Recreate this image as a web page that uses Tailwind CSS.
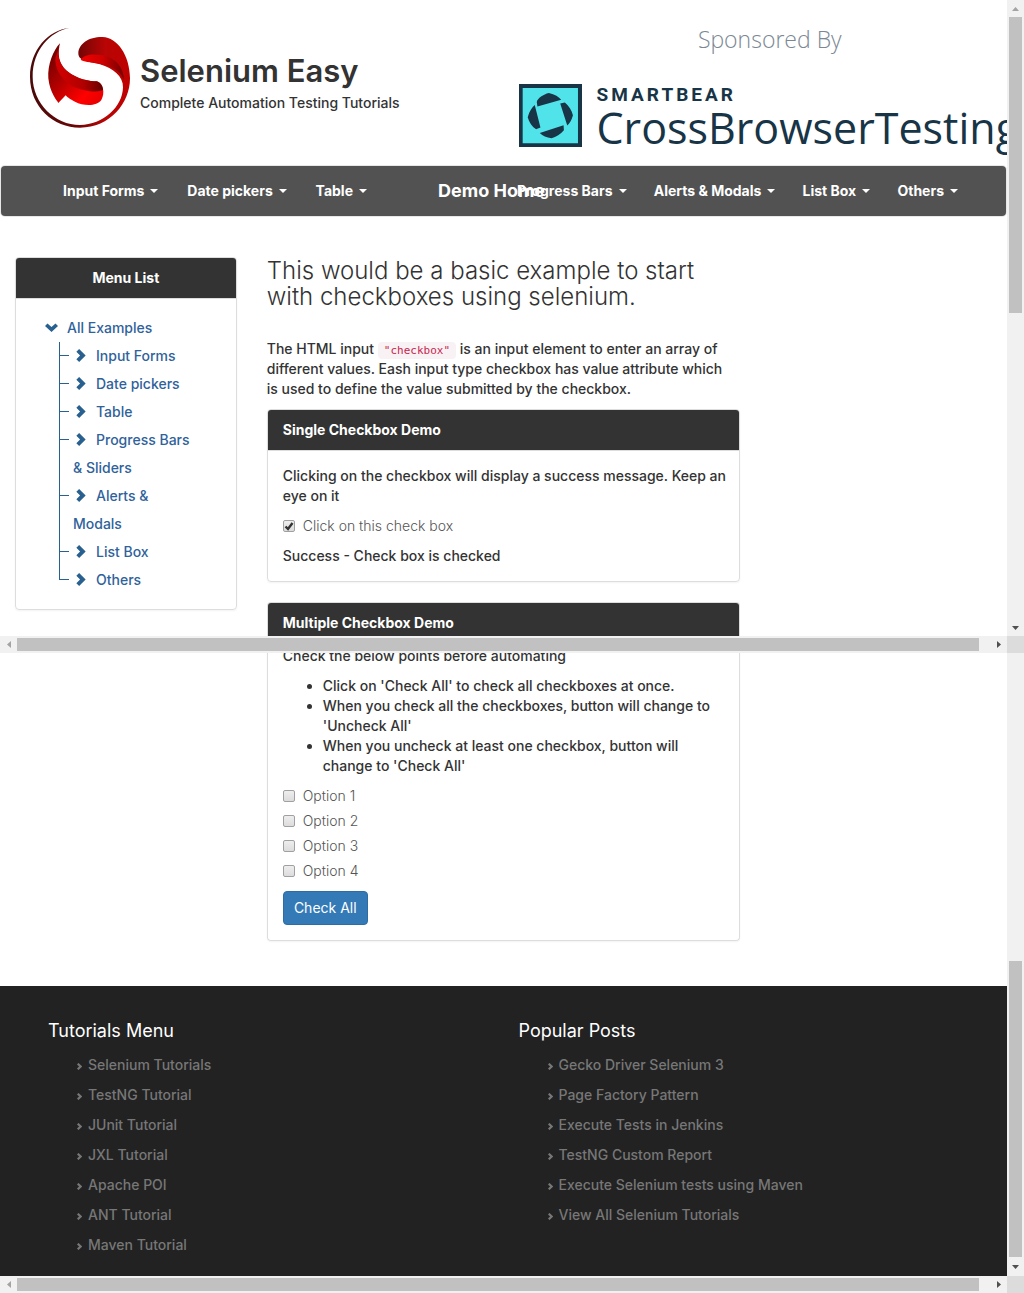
<!DOCTYPE html>
<html lang="en">
<head>
<meta charset="utf-8">
<title>Selenium Easy - Checkbox Demo</title>
<script src="https://cdn.jsdelivr.net/npm/@tailwindcss/browser@4"></script>
</head>
<body class="bg-white font-['Inter',sans-serif] text-[14px] leading-[20px] font-medium text-[#333]">
<svg class="hidden" aria-hidden="true">
  <symbol id="chev" viewBox="0 0 10 14"><path d="M0 3 3 0l7 7-7 7-3-3 4-4z" fill="currentColor"/></symbol>
  <symbol id="caret" viewBox="0 0 8 4"><path d="M0 0h8L4 4z" fill="currentColor"/></symbol>
  <symbol id="left" viewBox="0 0 4 7"><path d="M4 0v7L0 3.5z" fill="currentColor"/></symbol>
  <symbol id="right" viewBox="0 0 4 7"><path d="M0 0v7l4-3.5z" fill="currentColor"/></symbol>
  <symbol id="up" viewBox="0 0 7 4"><path d="M0 4h7L3.500 0z" fill="currentColor"/></symbol>
  <symbol id="down" viewBox="0 0 7 4"><path d="M0 0h7L3.500 4z" fill="currentColor"/></symbol>
  <symbol id="foot" viewBox="0 0 5 7"><path d="M.7.7 3.600 3.500.7 6.300" fill="none" stroke="currentColor" stroke-width="2.200"/></symbol>
</svg>

<!-- upper view -->
<section class="grid grid-cols-[minmax(0,1fr)_17px] grid-rows-[auto_17px]">
  <div class="overflow-hidden">
    <header class="grid grid-cols-2 h-[166px]">
      <div class="flex items-start pl-[30px] pt-7 gap-[10px]">
        <svg class="w-[100px] h-[100px] shrink-0" viewBox="90 84 300 300" role="img" aria-label="Selenium Easy">
          <defs>
            <linearGradient id="g1" x1="0" y1="0" x2="1" y2="0"><stop offset="0" stop-color="#4a0a0a"/><stop offset=".45" stop-color="#6a0505"/><stop offset=".75" stop-color="#b80505"/><stop offset="1" stop-color="#c00000"/></linearGradient>
            <linearGradient id="g2" x1="0" y1="0" x2="1" y2="1"><stop offset="0" stop-color="#5c0000"/><stop offset=".45" stop-color="#b80000"/><stop offset=".75" stop-color="#ff0000"/><stop offset="1" stop-color="#e00000"/></linearGradient>
            <linearGradient id="g3" x1="0" y1="0" x2="1" y2="0"><stop offset="0" stop-color="#d40000"/><stop offset=".6" stop-color="#b00000"/><stop offset="1" stop-color="#650000"/></linearGradient>
            <linearGradient id="g4" x1="0" y1="0" x2="1" y2="0"><stop offset="0" stop-color="#f00000"/><stop offset=".5" stop-color="#d00000"/><stop offset="1" stop-color="#700000"/></linearGradient>
          </defs>
          <path fill="url(#g1)" d="M235 160C236 130 268 110 308 111C352 113 389 165 390 235C390 310 330 383 240 383C160 383 90 320 90 230C90 150 145 90 208 84C150 95 98 150 98 230C98 310 165 375 240 375C310 375 368 320 369 262C370 230 340 205 300 193C270 185 235 185 235 160Z"/>
          <path fill="url(#g4)" d="M242 179C252 163 280 160 310 166C345 175 370 198 372 240C360 208 330 198 298 191C270 186 250 185 242 179Z"/>
          <path fill="url(#g2)" d="M180 130C172 160 175 190 200 212C235 240 270 243 290 244C310 250 316 280 304 300C290 320 250 318 225 305C210 298 200 290 197 286L175 309C170 300 150 280 145 235C142 195 160 150 180 130Z"/>
          <path fill="url(#g3)" d="M178 140C172 165 176 192 200 212C235 240 270 243 290 244C302 247 309 258 309 270C295 278 250 275 215 257C180 238 164 200 166 175Z"/>
        </svg>
        <div class="pt-[23px]">
          <h1 class="text-[31px] leading-[40px] font-semibold whitespace-nowrap">Selenium Easy</h1>
          <p class="mt-[2px] whitespace-nowrap">Complete Automation Testing Tutorials</p>
        </div>
      </div>
      <div class="pl-[15px] pt-6 font-['Open_Sans',sans-serif]">
        <p class="pl-[14px] text-center text-[23px] leading-[30px] font-light text-[#7b8894]">Sponsored By</p>
        <a href="#" class="mt-[30px] flex items-start gap-[15px] text-[#183447]">
          <svg class="w-[63px] h-[63px] shrink-0" viewBox="57 222 188 188" role="img" aria-label="SmartBear">
            <path fill="#183447" d="M57 222h188v188H57z"/><path fill="#50e4ea" d="M68 234h165v165H68z"/>
            <path fill="#183447" d="M110 276C112 264 130 253 146 249C164 253 176 261 183 269L112 289ZM180 280L194 277C206 287 214 300 218 315C214 330 208 340 201 346ZM190 345L191 360C181 372 168 380 154 384C139 382 128 376 119 368ZM121 352L108 357C95 349 87 335 83 321C88 304 96 292 104 285Z"/>
          </svg>
          <span class="block">
            <span class="block text-[19px] leading-[22px] font-bold tracking-[3px] font-['Roboto',sans-serif]">SMARTBEAR</span>
            <span class="block text-[43px] leading-[43px] font-normal whitespace-nowrap">CrossBrowserTesting</span>
          </span>
        </a>
      </div>
    </header>

    <nav class="relative mx-px flex h-[50px] items-center justify-between rounded-[4px] bg-[#525252] pl-[62px] pr-12 text-[14px] font-bold text-white ring-1 ring-[#e7e7e7]">
      <ul class="flex w-[304px] justify-between whitespace-nowrap">
        <li><a href="#" class="flex items-center gap-[6px]">Input Forms <svg class="h-1 w-2"><use href="#caret"/></svg></a></li>
        <li><a href="#" class="flex items-center gap-[6px]">Date pickers <svg class="h-1 w-2"><use href="#caret"/></svg></a></li>
        <li><a href="#" class="flex items-center gap-[6px]">Table <svg class="h-1 w-2"><use href="#caret"/></svg></a></li>
      </ul>
      <a href="#" class="absolute left-[437px] text-[18px] whitespace-nowrap">Demo Home</a>
      <ul class="flex w-[441px] justify-between whitespace-nowrap">
        <li><a href="#" class="flex items-center gap-[6px]">Progress Bars <svg class="h-1 w-2"><use href="#caret"/></svg></a></li>
        <li><a href="#" class="flex items-center gap-[6px]">Alerts &amp; Modals <svg class="h-1 w-2"><use href="#caret"/></svg></a></li>
        <li><a href="#" class="flex items-center gap-[6px]">List Box <svg class="h-1 w-2"><use href="#caret"/></svg></a></li>
        <li><a href="#" class="flex items-center gap-[6px]">Others <svg class="h-1 w-2"><use href="#caret"/></svg></a></li>
      </ul>
    </nav>

    <div class="flex items-start pt-[41px]">
      <aside class="w-1/4 px-[15px]">
        <div class="rounded-[4px] border border-[#ddd] shadow-xs">
          <h2 class="border-b border-[#ddd] bg-[#333] py-[10px] text-center font-bold text-white rounded-t-[3px]">Menu List</h2>
          <div class="pl-[29px] pt-[15px] pb-[15px] leading-[28px] text-[#2f629b] whitespace-nowrap">
            <a href="#" class="flex items-center"><svg class="mr-2 h-[14px] w-[14px]" viewBox="0 0 14 14"><path d="M0 5 2.500 2.500 6.500 6 10.500 2.500 13 5 6.500 11z" fill="#286090"/></svg>All Examples</a>
            <ul class="ml-[14px]">
              <li class="relative pl-[14px] before:absolute before:left-0 before:top-0 before:h-full before:w-px before:bg-[#286090] after:absolute after:left-0 after:top-[13px] after:h-px after:w-[10px] after:bg-[#286090]"><a href="#"><svg class="mr-[10px] ml-[3px] inline h-[13px] w-[10px] align-[-1px] text-[#286090]"><use href="#chev"/></svg>Input Forms</a></li>
              <li class="relative pl-[14px] before:absolute before:left-0 before:top-0 before:h-full before:w-px before:bg-[#286090] after:absolute after:left-0 after:top-[13px] after:h-px after:w-[10px] after:bg-[#286090]"><a href="#"><svg class="mr-[10px] ml-[3px] inline h-[13px] w-[10px] align-[-1px] text-[#286090]"><use href="#chev"/></svg>Date pickers</a></li>
              <li class="relative pl-[14px] before:absolute before:left-0 before:top-0 before:h-full before:w-px before:bg-[#286090] after:absolute after:left-0 after:top-[13px] after:h-px after:w-[10px] after:bg-[#286090]"><a href="#"><svg class="mr-[10px] ml-[3px] inline h-[13px] w-[10px] align-[-1px] text-[#286090]"><use href="#chev"/></svg>Table</a></li>
              <li class="relative pl-[14px] before:absolute before:left-0 before:top-0 before:h-full before:w-px before:bg-[#286090] after:absolute after:left-0 after:top-[13px] after:h-px after:w-[10px] after:bg-[#286090]"><a href="#"><svg class="mr-[10px] ml-[3px] inline h-[13px] w-[10px] align-[-1px] text-[#286090]"><use href="#chev"/></svg>Progress Bars<br>&amp; Sliders</a></li>
              <li class="relative pl-[14px] before:absolute before:left-0 before:top-0 before:h-full before:w-px before:bg-[#286090] after:absolute after:left-0 after:top-[13px] after:h-px after:w-[10px] after:bg-[#286090]"><a href="#"><svg class="mr-[10px] ml-[3px] inline h-[13px] w-[10px] align-[-1px] text-[#286090]"><use href="#chev"/></svg>Alerts &amp;<br>Modals</a></li>
              <li class="relative pl-[14px] before:absolute before:left-0 before:top-0 before:h-full before:w-px before:bg-[#286090] after:absolute after:left-0 after:top-[13px] after:h-px after:w-[10px] after:bg-[#286090]"><a href="#"><svg class="mr-[10px] ml-[3px] inline h-[13px] w-[10px] align-[-1px] text-[#286090]"><use href="#chev"/></svg>List Box</a></li>
              <li class="relative pl-[14px] before:absolute before:left-0 before:top-0 before:h-[14px] before:w-px before:bg-[#286090] after:absolute after:left-0 after:top-[13px] after:h-px after:w-[10px] after:bg-[#286090]"><a href="#"><svg class="mr-[10px] ml-[3px] inline h-[13px] w-[10px] align-[-1px] text-[#286090]"><use href="#chev"/></svg>Others</a></li>
            </ul>
          </div>
        </div>
      </aside>
      <main class="w-1/2 px-[15px] pt-px">
        <h2 class="text-[24px] leading-[26px] font-light whitespace-nowrap">This would be a basic example to start<br>with checkboxes using selenium.</h2>
        <p class="mt-[29px] mb-[10px] whitespace-nowrap">The HTML input <code class="rounded-[4px] bg-[#f9f2f4] px-[6px] py-[2px] align-middle font-['DejaVu_Sans_Mono',monospace] text-[11px] leading-none font-normal text-[#c7254e]">"checkbox"</code> is an input element to enter an array of<br>different values. Eash input type checkbox has value attribute which<br>is used to define the value submitted by the checkbox.</p>
        <div class="rounded-[4px] border border-[#ddd] shadow-xs">
          <h3 class="border-b border-[#ddd] bg-[#333] px-[15px] py-[10px] font-bold text-white rounded-t-[3px]">Single Checkbox Demo</h3>
          <div class="p-[15px] whitespace-nowrap">
            <p>Clicking on the checkbox will display a success message. Keep an<br>eye on it</p>
            <label class="my-[10px] flex items-center gap-[7px] font-light text-[#555]">
              <span class="grid h-[13px] w-[13px]">
                <input type="checkbox" checked class="col-start-1 row-start-1 h-3 w-3 appearance-none rounded-[2px] border border-[#a0a0a0] bg-linear-to-b from-[#eee] to-[#dcdcdc]">
                <svg class="pointer-events-none col-start-1 row-start-1 h-3 w-3" viewBox="0 0 12 12"><path d="M2.500 6.500 5 9l4.500-6" fill="none" stroke="#333" stroke-width="2.400"/></svg>
              </span>Click on this check box</label>
            <p>Success - Check box is checked</p>
          </div>
        </div>
        <div class="mt-5 rounded-t-[4px] border border-b-0 border-[#ddd]">
          <h3 class="rounded-t-[3px] bg-[#333] px-[15px] pt-[10px] pb-[3px] font-bold text-white">Multiple Checkbox Demo</h3>
        </div>
      </main>
    </div>
  </div>
  <div class="flex flex-col items-center bg-[#f1f1f1]">
    <span class="flex h-[17px] items-center text-[#a3a3a3]"><svg class="h-1 w-[7px]"><use href="#up"/></svg></span>
    <span class="h-[296px] w-[13px] bg-[#c1c1c1]"></span>
    <span class="mt-auto flex h-[17px] items-center text-[#505050]"><svg class="h-1 w-[7px]"><use href="#down"/></svg></span>
  </div>
  <div class="flex items-center bg-[#f1f1f1]">
    <span class="flex w-[17px] justify-center text-[#a3a3a3]"><svg class="h-[7px] w-1"><use href="#left"/></svg></span>
    <span class="mr-[11px] h-[13px] flex-1 bg-[#c1c1c1]"></span>
    <span class="flex w-[17px] justify-center text-[#505050]"><svg class="h-[7px] w-1"><use href="#right"/></svg></span>
  </div>
  <div class="bg-[#dcdcdc]"></div>
</section>

<!-- lower view, scrolled to the end of the page -->
<section class="grid grid-cols-[minmax(0,1fr)_17px] grid-rows-[auto_17px]">
  <div class="overflow-hidden">
    <div class="ml-[25%] w-1/2 px-[15px] pb-[45px]">
      <div class="-mt-[7px] rounded-b-[4px] border border-t-0 border-[#ddd] px-[15px] pb-[15px] shadow-xs whitespace-nowrap">
        <p class="mb-[10px]">Check the below points before automating</p>
        <ul class="mb-[10px] list-disc pl-10">
          <li>Click on 'Check All' to check all checkboxes at once.</li>
          <li>When you check all the checkboxes, button will change to<br>'Uncheck All'</li>
          <li>When you uncheck at least one checkbox, button will<br>change to 'Check All'</li>
        </ul>
        <div class="mb-[10px] flex flex-col gap-[5px] font-light text-[#555]">
          <label class="flex items-center gap-2"><input type="checkbox" class="h-3 w-3 appearance-none rounded-[2px] border border-[#a0a0a0] bg-linear-to-b from-[#eee] to-[#dcdcdc]">Option 1</label>
          <label class="flex items-center gap-2"><input type="checkbox" class="h-3 w-3 appearance-none rounded-[2px] border border-[#a0a0a0] bg-linear-to-b from-[#eee] to-[#dcdcdc]">Option 2</label>
          <label class="flex items-center gap-2"><input type="checkbox" class="h-3 w-3 appearance-none rounded-[2px] border border-[#a0a0a0] bg-linear-to-b from-[#eee] to-[#dcdcdc]">Option 3</label>
          <label class="flex items-center gap-2"><input type="checkbox" class="h-3 w-3 appearance-none rounded-[2px] border border-[#a0a0a0] bg-linear-to-b from-[#eee] to-[#dcdcdc]">Option 4</label>
        </div>
        <button type="button" class="h-[34px] w-[85px] rounded-[4px] border border-[#2e6da4] bg-[#337ab7] text-[14px] font-normal text-white">Check All</button>
      </div>
    </div>
    <footer class="grid grid-cols-2 bg-[#222] px-[33px] pt-[34px] pb-4 text-[#777] whitespace-nowrap">
      <div class="px-[15px]">
        <h4 class="text-[18px] leading-[22px] font-normal text-white">Tutorials Menu</h4>
        <ul class="mt-[8px] pl-[29px] leading-[30px]">
          <li class="flex items-center gap-[6px]"><svg class="mt-[3px] h-[7px] w-[5px]"><use href="#foot"/></svg><a href="#">Selenium Tutorials</a></li>
          <li class="flex items-center gap-[6px]"><svg class="mt-[3px] h-[7px] w-[5px]"><use href="#foot"/></svg><a href="#">TestNG Tutorial</a></li>
          <li class="flex items-center gap-[6px]"><svg class="mt-[3px] h-[7px] w-[5px]"><use href="#foot"/></svg><a href="#">JUnit Tutorial</a></li>
          <li class="flex items-center gap-[6px]"><svg class="mt-[3px] h-[7px] w-[5px]"><use href="#foot"/></svg><a href="#">JXL Tutorial</a></li>
          <li class="flex items-center gap-[6px]"><svg class="mt-[3px] h-[7px] w-[5px]"><use href="#foot"/></svg><a href="#">Apache POI</a></li>
          <li class="flex items-center gap-[6px]"><svg class="mt-[3px] h-[7px] w-[5px]"><use href="#foot"/></svg><a href="#">ANT Tutorial</a></li>
          <li class="flex items-center gap-[6px]"><svg class="mt-[3px] h-[7px] w-[5px]"><use href="#foot"/></svg><a href="#">Maven Tutorial</a></li>
        </ul>
      </div>
      <div class="px-[15px]">
        <h4 class="text-[18px] leading-[22px] font-normal text-white">Popular Posts</h4>
        <ul class="mt-[8px] pl-[29px] leading-[30px]">
          <li class="flex items-center gap-[6px]"><svg class="mt-[3px] h-[7px] w-[5px]"><use href="#foot"/></svg><a href="#">Gecko Driver Selenium 3</a></li>
          <li class="flex items-center gap-[6px]"><svg class="mt-[3px] h-[7px] w-[5px]"><use href="#foot"/></svg><a href="#">Page Factory Pattern</a></li>
          <li class="flex items-center gap-[6px]"><svg class="mt-[3px] h-[7px] w-[5px]"><use href="#foot"/></svg><a href="#">Execute Tests in Jenkins</a></li>
          <li class="flex items-center gap-[6px]"><svg class="mt-[3px] h-[7px] w-[5px]"><use href="#foot"/></svg><a href="#">TestNG Custom Report</a></li>
          <li class="flex items-center gap-[6px]"><svg class="mt-[3px] h-[7px] w-[5px]"><use href="#foot"/></svg><a href="#">Execute Selenium tests using Maven</a></li>
          <li class="flex items-center gap-[6px]"><svg class="mt-[3px] h-[7px] w-[5px]"><use href="#foot"/></svg><a href="#">View All Selenium Tutorials</a></li>
        </ul>
      </div>
    </footer>
  </div>
  <div class="flex flex-col items-center bg-[#f1f1f1]">
    <span class="mt-auto h-[296px] w-[13px] bg-[#c1c1c1]"></span>
    <span class="flex h-[19px] items-center text-[#505050]"><svg class="h-1 w-[7px]"><use href="#down"/></svg></span>
  </div>
  <div class="flex items-center bg-[#f1f1f1]">
    <span class="flex w-[17px] justify-center text-[#a3a3a3]"><svg class="h-[7px] w-1"><use href="#left"/></svg></span>
    <span class="mr-[11px] h-[13px] flex-1 bg-[#c1c1c1]"></span>
    <span class="flex w-[17px] justify-center text-[#505050]"><svg class="h-[7px] w-1"><use href="#right"/></svg></span>
  </div>
  <div class="bg-[#dcdcdc]"></div>
</section>
</body>
</html>
